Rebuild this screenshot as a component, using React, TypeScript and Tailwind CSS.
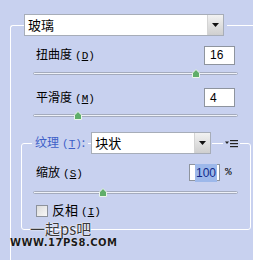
import React from 'react';

const cjk = { fontFamily: '"SimSun", "Noto Sans CJK SC", "Liberation Sans", sans-serif' };

// underlined access-key letter, e.g. (D)
function Key({ k }: { k: string }) {
  return (
    <span className="ml-[3px] text-[11px]" style={{ fontFamily: '"Liberation Mono", monospace' }}>
      (<span className="underline underline-offset-1">{k}</span>)
    </span>
  );
}

function Arrow() {
  return (
    <div className="w-[16px] h-full flex items-center justify-center border-l border-[#d4d4d4] bg-gradient-to-b from-[#f2f2f2] to-[#cfcfcf]">
      <svg width="7" height="4" viewBox="0 0 7 4">
        <polygon points="0,0 7,0 3.5,4" fill="#111" />
      </svg>
    </div>
  );
}

function Select({ value, width }: { value: string; width: string }) {
  return (
    <div className={`${width} h-[22px] flex items-stretch bg-white border border-[#a7adb8]`}>
      <div className="flex-1 flex items-center pl-[3px] text-[13px] text-black" style={cjk}>
        {value}
      </div>
      <Arrow />
    </div>
  );
}

function Slider({ pos }: { pos: number }) {
  return (
    <div className="relative w-[205px] h-[10px] flex items-center">
      <div className="w-full h-[3px] rounded-full border border-[#a4abbd] bg-[#eef1f8]" />
      <svg
        className="absolute top-[1px]"
        style={{ left: pos - 4 }}
        width="8"
        height="9"
        viewBox="0 0 8 9"
      >
        <polygon points="4,0.5 7.5,4 7.5,8.5 0.5,8.5 0.5,4" fill="#5fae6a" stroke="#eaf5ea" />
      </svg>
    </div>
  );
}

function NumBox({ value, w, selected }: { value: string; w: string; selected?: boolean }) {
  return (
    <div className={`${w} h-[19px] flex items-center pl-[5px] bg-white border border-[#8e949e] text-[12px]`}
      style={{ fontFamily: '"Liberation Sans", sans-serif' }}>
      {selected ? <span className="bg-[#9db8ea] text-[#102a8a] px-[1px]">{value}</span> : value}
    </div>
  );
}

export default function App() {
  return (
    <div className="relative w-[253px] h-[260px] overflow-hidden bg-[#c8d1ef] text-black">
      {/* outer group */}
      <div className="ml-[10px] mt-[25px] w-[260px] h-[260px] border-l border-t border-white rounded-tl-[3px]">
        <div className="-mt-[12px] ml-[13px] w-[203px] pr-[3px] bg-[#c8d1ef]">
          <Select value="玻璃" width="w-[200px]" />
        </div>

        <div className="mt-[9px] h-[20px] flex items-center">
          <div className="ml-[25px] w-[168px] text-[12px]" style={cjk}>
            扭曲度<Key k="D" />
          </div>
          <NumBox value="16" w="w-[31px]" />
        </div>
        <div className="mt-[3px] ml-[22px]">
          <Slider pos={163} />
        </div>

        <div className="mt-[10px] h-[19px] flex items-center">
          <div className="ml-[25px] w-[168px] text-[12px]" style={cjk}>
            平滑度<Key k="M" />
          </div>
          <NumBox value="4" w="w-[31px]" />
        </div>
        <div className="mt-[3px] ml-[22px]">
          <Slider pos={45} />
        </div>

        {/* texture group */}
        <div className="mt-[23px] ml-[10px] w-[230px] h-[87px] border border-white rounded-[3px]">
          <div className="-mt-[12px] h-[22px] flex items-center">
            <div className="ml-[10px] px-[3px] bg-[#c8d1ef] text-[12px] text-[#3d5fc8]" style={cjk}>
              纹理<Key k="T" />:
            </div>
            <div className="ml-[3px] w-[121px] pr-[1px] bg-[#c8d1ef]">
              <Select value="块状" width="w-[120px]" />
            </div>
            <div className="ml-[11px] px-[2px] h-[10px] flex items-center bg-[#c8d1ef]">
              <svg width="13" height="9" viewBox="0 0 13 9">
                <polygon points="0,2.5 4,2.5 2,5" fill="#222" />
                <rect x="5" y="1" width="8" height="1.2" fill="#222" />
                <rect x="5" y="4" width="8" height="1.2" fill="#222" />
                <rect x="5" y="7" width="8" height="1.2" fill="#222" />
              </svg>
            </div>
          </div>

          <div className="mt-[10px] h-[17px] flex items-center">
            <div className="ml-[14px] w-[153px] text-[12px]" style={cjk}>
              缩放<Key k="S" />
            </div>
            <NumBox value="100" w="w-[31px] !h-[17px]" selected />
            <span className="ml-[5px] text-[11px]" style={{ fontFamily: '"Liberation Mono", monospace' }}>%</span>
          </div>
          <div className="mt-[6px] ml-[11px]">
            <Slider pos={70} />
          </div>

          <div className="mt-[7px] h-[13px] flex items-center">
            <div className="ml-[14px] w-[12px] h-[12px] border border-[#8d929c] bg-gradient-to-br from-[#dcdcdc] to-[#f8f8f8]" />
            <div className="ml-[4px] text-[13px] leading-[13px]" style={cjk}>
              反相<Key k="I" />
            </div>
          </div>
        </div>
      </div>

      {/* watermark */}
      <div
        className="absolute left-[30px] top-[222px] text-[15px] leading-[14px] text-[#3a3a3a]"
        style={{ ...cjk, textShadow: '0 0 2px #fff, 0 0 1px #fff' }}
      >
        一起ps吧
      </div>
      <div
        className="absolute left-[10px] top-[238px] text-[10px] leading-[10px] font-bold uppercase tracking-[0.5px] text-[#1a1a1a]"
        style={{ fontFamily: '"DejaVu Sans", sans-serif', textShadow: '0 0 1px #fff' }}
      >
        www.17PS8.com
      </div>
    </div>
  );
}
